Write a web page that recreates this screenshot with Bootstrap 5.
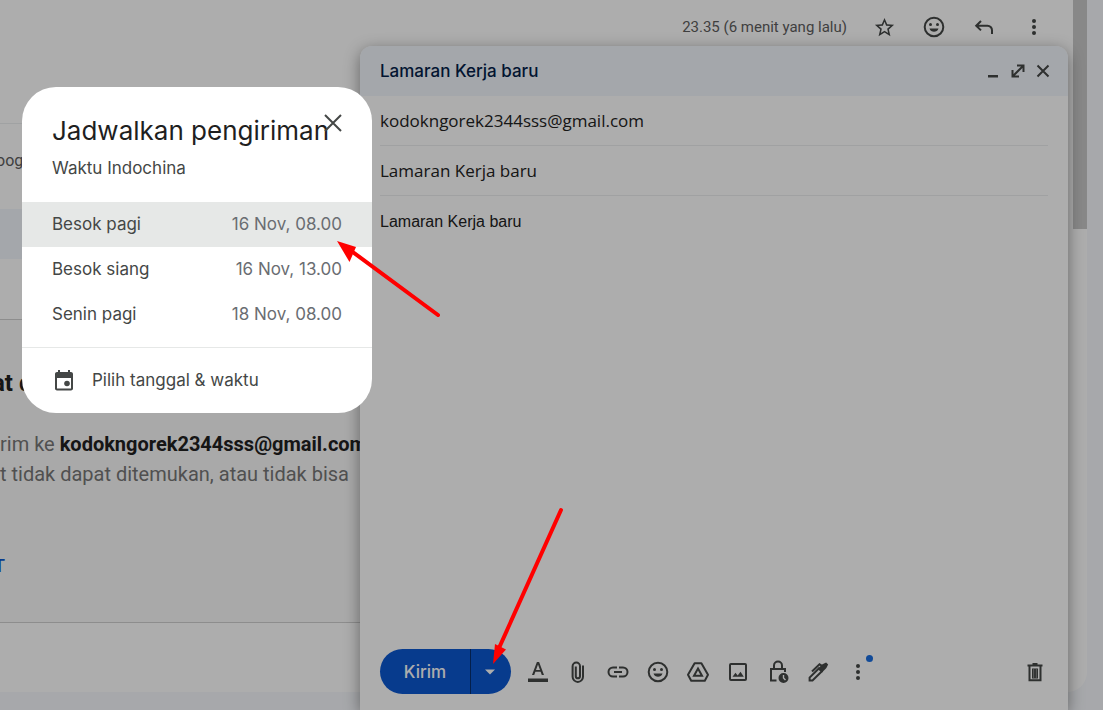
<!doctype html>
<html lang="id">
<head>
<meta charset="utf-8">
<meta name="viewport" content="width=device-width, initial-scale=1">
<title>Jadwalkan pengiriman</title>
<link href="https://cdn.jsdelivr.net/npm/bootstrap@5.3.0/dist/css/bootstrap.min.css" rel="stylesheet">
<style>
  body { background: #f6f8fc; font-family: "Open Sans", "Noto Sans", sans-serif; font-size: 17px; line-height: 24px; color: #444746; }
  svg { display: block; fill: currentColor; }
  .ln { fill: none; stroke: currentColor; stroke-width: 2; }
  .icon-btn { display: flex; align-items: center; justify-content: center; padding: 0; border: 0; background: none; color: #444746; }

  /* message behind the dialog */
  .mail-pane { background: #fff; margin-right: 16px; border-radius: 0 0 20px 0; font-family: Roboto, sans-serif; padding-bottom: 69px; }
  .mail-tools { height: 54px; padding-right: 28px; font-size: 15px; color: #5e5e5e; }
  .mail-tools .icon-btn { width: 50px; height: 50px; }
  .mail-body { margin-right: 40px; }
  .mail-rule { height: 70px; border-bottom: 1px solid #eceff1; }
  .snippet { height: 85px; padding-top: 25px; margin-left: -4px; font-size: 16px; color: #5e5e5e; }
  .notice-band { height: 50px; background: #f2f6fc; margin-bottom: 60px; }
  .bounce-card { background: #fafafa; border-top: 1px solid #d0d0d0; border-bottom: 1px solid #d0d0d0; padding: 47px 0 44px; }
  .bounce-card h1 { font-size: 24px; line-height: 32px; font-weight: 700; color: #212121; margin: 0 0 30px -8px; }
  .bounce-card p { font-size: 20px; line-height: 30px; color: #777; margin-bottom: 65px; }
  .bounce-card strong { color: #212121; font-weight: 700; }
  .bounce-card a { display: block; width: 12px; margin-left: -6px; font-size: 18px; font-weight: 500; color: #0b57d0; text-decoration: none; }
  .scroll-thumb { position: absolute; top: 0; right: 16px; width: 14px; height: 229px; background: #c9c9c9; }

  /* compose window */
  .compose { top: 46px; left: 360px; right: 35px; bottom: 0; background: #fff; border-radius: 12px 12px 0 0; box-shadow: 0 4px 16px rgba(0,0,0,.42); }
  .compose-head { height: 50px; flex: none; padding: 0 13px 0 20px; background: #f2f6fc; border-radius: 12px 12px 0 0; }
  .compose-head h2 { font-family: Inter, sans-serif; font-size: 17px; line-height: 24px; font-weight: 500; color: #041e49; }
  .compose-head .icon-btn { width: 25px; height: 30px; }
  .field { height: 50px; border: 0; border-bottom: 1px solid #eceeef; padding: 0; background: none; color: #222; width: 100%; outline: 0; border-radius: 0; }
  .letter { border: 0; padding: 14px 0; resize: none; outline: 0; color: #222; font: 16px/24px "Liberation Sans", Arial, sans-serif; }
  .compose-foot { padding: 0 13px 16px 20px; }
  .send { height: 45px; border: 0; background: #0b57d0; color: #fff; font-family: Inter, sans-serif; font-weight: 500; }
  .send-main { width: 90px; border-radius: 23px 0 0 23px; }
  .send-more { width: 40px; margin-left: 1px; border-radius: 0 23px 23px 0; padding: 0 2px 0 0; }
  .send-group { background: linear-gradient(#062e6f, #062e6f) 90px 0 / 1px 100% no-repeat; margin-right: 7px; }
  .compose-foot .icon-btn { width: 40px; height: 40px; }
  .dot { position: absolute; top: 3px; right: 5px; width: 7px; height: 7px; border-radius: 50%; background: #1a6ee0; }

  .scrim { background: rgba(0,0,0,.32); }

  /* schedule dialog */
  .schedule { top: 87px; left: 22px; width: 350px; background: #fff; border-radius: 34px; overflow: hidden; font-family: Inter, sans-serif; }
  .schedule-head { padding: 26px 30px 22px; }
  .schedule-head h3 { font-size: 26px; line-height: 36px; font-weight: 400; color: #1f1f1f; margin-bottom: 7px; white-space: nowrap; }
  .schedule-head .icon-btn { position: absolute; top: 23px; right: 27px; width: 25px; height: 25px; }
  .slot { height: 45px; padding: 0 30px 1px; border: 0; background: none; color: #444746; text-align: left; }
  .slot.chosen { background: #e6e8e7; }
  .slot span + span { color: #6a6d72; }
  .pick { height: 66px; margin-top: 10px; padding: 0 30px 1px; border: 0; border-top: 1px solid #e6e8e7; background: none; color: #444746; }
  .arrow { position: absolute; color: #f00; pointer-events: none; }
  .arrow-slot { top: 235px; left: 330px; }
  .arrow-send { top: 500px; left: 485px; }
</style>
</head>
<body class="vh-100 overflow-hidden position-relative">

<main class="mail-pane overflow-hidden text-nowrap">
  <div class="mail-tools d-flex align-items-center justify-content-end">
    <span class="me-2 pe-1">23.35 (6 menit yang lalu)</span>
    <button class="icon-btn" aria-label="Bintangi"><svg width="23" height="23" viewBox="0 0 24 24"><path d="M22 9.24l-7.19-.62L12 2 9.19 8.63 2 9.24l5.46 4.73L5.82 21 12 17.27 18.18 21l-1.63-7.03L22 9.24zM12 15.4l-3.76 2.27 1-4.28-3.32-2.88 4.38-.38L12 6.1l1.71 4.04 4.38.38-3.32 2.88 1 4.28L12 15.4z"/></svg></button>
    <button class="icon-btn" aria-label="Tambahkan reaksi"><svg width="24" height="24" viewBox="0 0 24 24"><circle class="ln" cx="12" cy="12" r="9.3"/><circle cx="8.5" cy="9.5" r="1.5"/><circle cx="15.5" cy="9.5" r="1.5"/><path d="M7.500 13.600h9c-.7 2.100-2.500 3.200-4.500 3.200s-3.800-1.100-4.500-3.200z"/></svg></button>
    <button class="icon-btn" aria-label="Balas"><svg width="24" height="24" viewBox="0 0 24 24"><path class="ln" d="M9 6 4.200 10.700 9 15.400M4.200 10.700H15.500A4.500 4.500 0 0 1 20 15.200V19"/></svg></button>
    <button class="icon-btn" aria-label="Lainnya"><svg width="24" height="24" viewBox="0 0 24 24"><circle cx="12" cy="6" r="2"/><circle cx="12" cy="12" r="2"/><circle cx="12" cy="18" r="2"/></svg></button>
  </div>
  <div class="mail-body">
    <div class="mail-rule"></div>
    <div class="snippet">oog</div>
    <div class="notice-band"></div>
    <section class="bounce-card">
      <h1>at d</h1>
      <p>rim ke <strong>kodokngorek2344sss@gmail.com</strong><br>t tidak dapat ditemukan, atau tidak bisa</p>
      <a href="#">T</a>
    </section>
  </div>
</main>
<div class="scroll-thumb"></div>

<section class="compose position-absolute d-flex flex-column">
  <header class="compose-head d-flex align-items-center">
    <h2 class="m-0 me-auto">Lamaran Kerja baru</h2>
    <button class="icon-btn" aria-label="Minimalkan"><svg width="20" height="20" viewBox="0 0 20 20"><path d="M5 14h10v2.500H5z"/></svg></button>
    <button class="icon-btn" aria-label="Layar penuh"><svg width="20" height="20" viewBox="0 0 20 20"><path class="ln" d="M9 4.500h6.500V11M4.500 9v6.500H11M15 5 5 15"/></svg></button>
    <button class="icon-btn" aria-label="Tutup"><svg width="20" height="20" viewBox="0 0 20 20"><path class="ln" d="m4.500 4.500 11 11m0-11-11 11"/></svg></button>
  </header>
  <div class="flex-grow-1 d-flex flex-column px-3 mx-1">
    <input class="field" aria-label="Kepada" value="kodokngorek2344sss@gmail.com">
    <input class="field" aria-label="Subjek" value="Lamaran Kerja baru">
    <textarea class="letter flex-grow-1" aria-label="Isi pesan">Lamaran Kerja baru</textarea>
  </div>
  <footer class="compose-foot d-flex align-items-center">
    <div class="send-group d-flex">
      <button class="send send-main">Kirim</button>
      <button class="send send-more d-flex align-items-center justify-content-center" aria-label="Opsi pengiriman"><svg width="12" height="6" viewBox="0 0 12 6"><path d="M1 .5h10L6 5.500z"/></svg></button>
    </div>
    <button class="icon-btn" aria-label="Format"><svg width="24" height="24" viewBox="0 0 24 24"><path d="M2 18.500h20V22H2zM10.900 2h2.200L18 15h-2.200l-1.200-3.200H9.400L8.200 15H6zm-.9 8h4L12 4.600z"/></svg></button>
    <button class="icon-btn" aria-label="Lampirkan file"><svg width="24" height="24" viewBox="0 0 24 24"><path class="ln" d="M17 5.500v11.200a5.200 5.200 0 0 1-10.400 0V6.200a3.700 3.700 0 0 1 7.400 0v10a2 2 0 0 1-4.200 0V6.500"/></svg></button>
    <button class="icon-btn" aria-label="Sisipkan link"><svg width="24" height="24" viewBox="0 0 24 24"><path class="ln" d="M11 7.500H7a4.500 4.500 0 0 0 0 9h4M13 7.500h4a4.500 4.500 0 0 1 0 9h-4M8 12h8"/></svg></button>
    <button class="icon-btn" aria-label="Sisipkan emoji"><svg width="24" height="24" viewBox="0 0 24 24"><circle class="ln" cx="12" cy="12" r="9.300"/><circle cx="8.500" cy="9.500" r="1.500"/><circle cx="15.500" cy="9.500" r="1.500"/><path d="M7.500 13.600h9c-.7 2.100-2.500 3.200-4.500 3.200s-3.800-1.100-4.500-3.200z"/></svg></button>
    <button class="icon-btn" aria-label="Drive"><svg width="24" height="24" viewBox="0 0 24 24"><path class="ln" stroke-linejoin="round" d="M8.600 3.200h6.800L22 14.800l-3.200 6H5.200l-3.200-6z"/><path class="ln" d="m12 8.500 4 7.200H8z"/></svg></button>
    <button class="icon-btn" aria-label="Sisipkan foto"><svg width="24" height="24" viewBox="0 0 24 24"><rect class="ln" x="4" y="4" width="16" height="16" rx="1"/><path d="m6.500 16.800 3-4 2.200 2.600 2.800-3.700 3.300 5.100z"/></svg></button>
    <button class="icon-btn" aria-label="Mode rahasia"><svg width="24" height="24" viewBox="0 0 24 24"><path class="ln" d="M10.500 20.500H5V9h14v3M8 9V5.500a4 4 0 0 1 8 0V9"/><path fill-rule="evenodd" d="M17.500 13a5 5 0 1 0 0 10 5 5 0 0 0 0-10zm-.7 2h1.400v2.700l1.800 1.800-1 1-2.200-2.200z"/></svg></button>
    <button class="icon-btn" aria-label="Tanda tangan"><svg width="24" height="24" viewBox="0 0 24 24"><path d="m12 8.500 4.500-4.300 3.600-1.700 2 2-1.700 3.400-4.400 4.600z"/><path class="ln" d="m12.800 8.500 2.900 2.900L6.500 20.500H3.600v-2.900zM6 11.500l7.500-7.300 2.500 1.600"/></svg></button>
    <button class="icon-btn position-relative" aria-label="Opsi lainnya"><svg width="24" height="24" viewBox="0 0 24 24"><circle cx="12" cy="6" r="2"/><circle cx="12" cy="12" r="2"/><circle cx="12" cy="18" r="2"/></svg><span class="dot"></span></button>
    <button class="icon-btn ms-auto" aria-label="Hapus draf"><svg width="24" height="24" viewBox="0 0 24 24"><path d="M4.500 4.500h5V3h5v1.500h5v2h-15zM9 8.500h6v10H9z"/><path class="ln" d="M6.500 6v14.200h11V6"/><path d="M10.300 8.500h.8v10h-.8zm2.600 0h.8v10h-.8z" fill="#999"/></svg></button>
  </footer>
</section>

<div class="scrim position-absolute top-0 start-0 w-100 h-100"></div>

<div class="schedule position-absolute d-flex flex-column" role="dialog" aria-labelledby="schedule-title">
  <div class="schedule-head">
    <h3 id="schedule-title">Jadwalkan pengiriman</h3>
    <div>Waktu Indochina</div>
    <button class="icon-btn" aria-label="Tutup dialog"><svg width="24" height="24" viewBox="0 0 24 24"><path class="ln" d="m4 4 16 16m0-16L4 20"/></svg></button>
  </div>
  <button class="slot chosen d-flex align-items-center justify-content-between"><span>Besok pagi</span><span>16 Nov, 08.00</span></button>
  <button class="slot d-flex align-items-center justify-content-between"><span>Besok siang</span><span>16 Nov, 13.00</span></button>
  <button class="slot d-flex align-items-center justify-content-between"><span>Senin pagi</span><span>18 Nov, 08.00</span></button>
  <button class="pick d-flex align-items-center gap-3"><svg width="24" height="24" viewBox="0 0 24 24"><path fill-rule="evenodd" d="M19 4h-1V2h-2v2H8V2H6v2H5c-1.100 0-2 .9-2 2v14.500c0 1.100.9 2 2 2h14c1.100 0 2-.9 2-2V6c0-1.100-.9-2-2-2zm0 16.500H5V10h14z"/><circle cx="15" cy="15.500" r="2.800"/></svg>Pilih tanggal &amp; waktu</button>
</div>

<svg class="arrow arrow-slot" width="116" height="90" viewBox="0 0 116 90"><path d="M18 13.500 108 80" stroke="currentColor" stroke-width="4" stroke-linecap="round"/><path d="m7 6 19 6-6.500 15z"/></svg>
<svg class="arrow arrow-send" width="84" height="170" viewBox="0 0 84 170"><path d="M14 148 76 10" stroke="currentColor" stroke-width="4" stroke-linecap="round"/><path d="m8 164 2-20 11 5.500z"/></svg>

<script src="https://cdn.jsdelivr.net/npm/bootstrap@5.3.0/dist/js/bootstrap.bundle.min.js"></script>
</body>
</html>
